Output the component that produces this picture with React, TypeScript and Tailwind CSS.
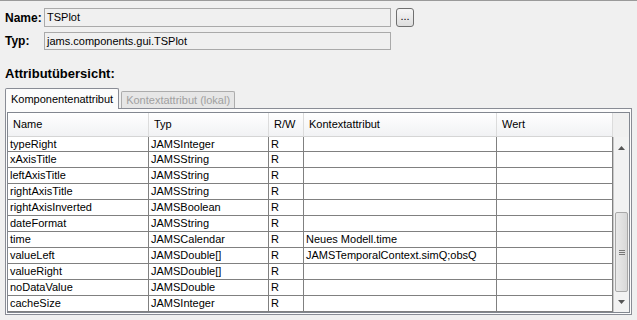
import React from 'react';

const rows: [string, string, string, string, string][] = [
  ['typeRight', 'JAMSInteger', 'R', '', ''],
  ['xAxisTitle', 'JAMSString', 'R', '', ''],
  ['leftAxisTitle', 'JAMSString', 'R', '', ''],
  ['rightAxisTitle', 'JAMSString', 'R', '', ''],
  ['rightAxisInverted', 'JAMSBoolean', 'R', '', ''],
  ['dateFormat', 'JAMSString', 'R', '', ''],
  ['time', 'JAMSCalendar', 'R', 'Neues Modell.time', ''],
  ['valueLeft', 'JAMSDouble[]', 'R', 'JAMSTemporalContext.simQ;obsQ', ''],
  ['valueRight', 'JAMSDouble[]', 'R', '', ''],
  ['noDataValue', 'JAMSDouble', 'R', '', ''],
  ['cacheSize', 'JAMSInteger', 'R', '', ''],
];

const headers = ['Name', 'Typ', 'R/W', 'Kontextattribut', 'Wert'];
const cols = 'grid grid-cols-[141px_120px_35px_193px_116px]';

function ScrollBar() {
  return (
    <div className="flex w-[18px] flex-col border-l border-[#c8c8c8] bg-[#f2f2f2]">
      <div className="flex h-[22px] items-center justify-center">
        <svg width="7" height="4" viewBox="0 0 7 4">
          <path d="M0 4 L3.5 0 L7 4 Z" fill="#555" />
        </svg>
      </div>
      <div className="h-[53px]" />
      <div className="mx-[1px] flex h-[80px] items-center justify-center rounded-[2px] border border-[#a8a8a8] bg-gradient-to-r from-[#eaeaea] to-[#d8d8d8]">
        <div className="flex flex-col gap-[1px]">
          <div className="h-[1px] w-[6px] bg-[#777]" />
          <div className="h-[1px] w-[6px] bg-[#777]" />
          <div className="h-[1px] w-[6px] bg-[#777]" />
        </div>
      </div>
      <div className="flex flex-1 items-center justify-center">
        <svg width="7" height="4" viewBox="0 0 7 4">
          <path d="M0 0 L7 0 L3.5 4 Z" fill="#555" />
        </svg>
      </div>
    </div>
  );
}

export default function App() {
  return (
    <div className="h-[320px] w-[637px] overflow-hidden border-t border-[#9a9a9a] bg-[#f0f0f0] font-['Liberation_Sans',sans-serif] text-[11px] text-black">
      <div className="flex flex-col gap-[5px] pl-[5px] pt-[7px]">
        <div className="flex items-center">
          <span className="w-[39px] text-[12px] font-bold">Name:</span>
          <div className="flex h-[19px] w-[347px] items-center border border-[#aaaaaa] bg-[#f0f0f0] pl-[2px]">TSPlot</div>
          <button className="ml-[5px] flex h-[19px] w-[18px] items-center justify-center rounded-[3px] border border-[#707070] bg-gradient-to-b from-[#f6f6f6] to-[#dedede] pb-[3px] text-[11px] leading-none">
            ...
          </button>
        </div>
        <div className="flex items-center">
          <span className="w-[39px] text-[12px] font-bold">Typ:</span>
          <div className="flex h-[18px] w-[347px] items-center border border-[#aaaaaa] bg-[#f0f0f0] pl-[2px]">jams.components.gui.TSPlot</div>
        </div>
      </div>

      <div className="mt-[17px] pl-[5px] text-[13px] font-bold leading-none">Attributübersicht:</div>

      <div className="ml-[5px] mr-[5px] mt-[8px]">
        <div className="flex items-end">
          <div className="relative z-10 -mb-[1px] flex h-[21px] items-center rounded-t-[2px] border border-b-0 border-[#898c95] bg-[#fcfcfc] px-[5px]">
            Komponentenattribut
          </div>
          <div className="ml-[2px] flex h-[17px] items-center rounded-t-[2px] border border-b-0 border-[#acacac] bg-[#e6e6e6] px-[4px] text-[#a0a0a0]">
            Kontextattribut (lokal)
          </div>
        </div>
        <div className="h-[207px] border border-[#898c95] bg-[#fcfcfc] p-[1px] pt-[3px]">
          <div className="flex h-[201px] flex-col border border-[#828790] bg-[#f0f0f0]">
            <div className="flex h-[24px]">
              <div className={`${cols} border-b border-[#d5d5d5] bg-gradient-to-b from-[#ffffff] to-[#f1f2f4]`}>
                {headers.map((h) => (
                  <div key={h} className="flex items-center border-r border-[#dcdcdc] pl-[5px]">
                    {h}
                  </div>
                ))}
              </div>
              <div className="flex-1" />
            </div>
            <div className="flex flex-1 overflow-hidden">
              <div className="flex flex-col bg-white">
                {rows.map((r, i) => (
                  <div key={r[0]} className={`${cols} ${i === 0 ? 'h-[15px]' : 'h-[16px]'} border-b border-[#808080]`}>
                    {r.map((c, j) => (
                      <div key={j} className="flex items-center overflow-hidden whitespace-nowrap border-r border-[#808080] pl-[2px] leading-none">
                        {c}
                      </div>
                    ))}
                  </div>
                ))}
              </div>
              <ScrollBar />
            </div>
          </div>
        </div>
      </div>
    </div>
  );
}
